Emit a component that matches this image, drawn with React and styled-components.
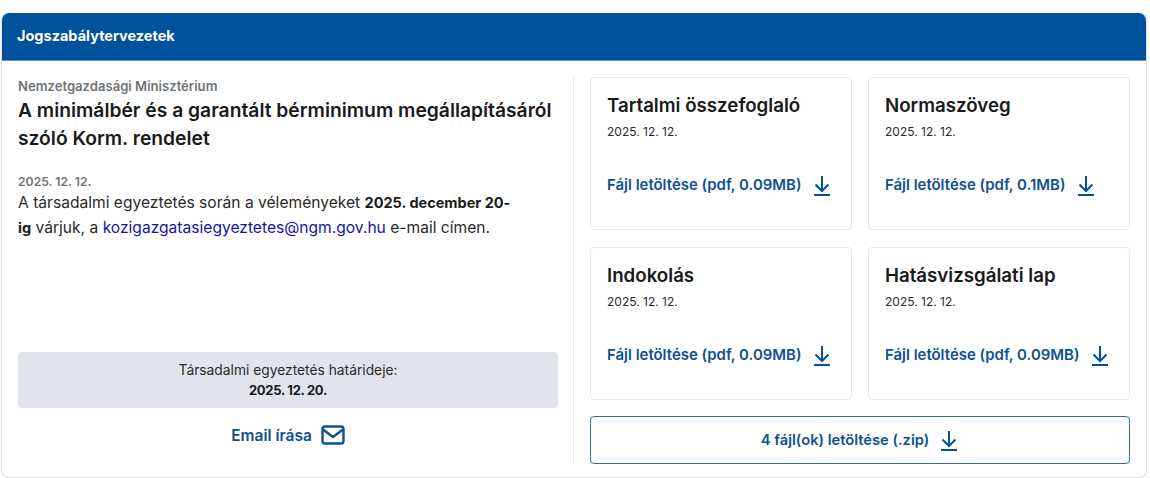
import styled, { createGlobalStyle } from 'styled-components';

const GlobalStyle = createGlobalStyle`
  html, body {
    margin: 0;
    background: #fff;
    font-family: 'Inter', 'Lato', sans-serif;
    color: #1a1a1a;
  }
`;

const BLUE = '#00529c';
const LINK = '#0f5092';

const Page = styled.div`
  padding: 13px 3px 0 1px;
`;

const Panel = styled.section`
  height: 465px;
  border: 1px solid #d9dde3;
  border-top: 0;
  border-radius: 8px;
  box-sizing: border-box;
  overflow: hidden;
  display: flex;
  flex-direction: column;
`;

const PanelHeader = styled.h2`
  margin: 0 -1px;
  height: 48px;
  padding: 0 0 2px 16px;
  display: flex;
  align-items: center;
  background: ${BLUE};
  border-bottom: 1px solid #5f93cf;
  box-sizing: border-box;
  color: #fff;
  font-size: 14.5px;
  font-weight: 700;
`;

const Body = styled.div`
  flex: 1;
  min-height: 0;
  display: grid;
  grid-template-columns: 572px 1fr;
  padding: 16px 16px 13px 0;
`;

const Left = styled.div`
  padding: 0 15px 0 16px;
  border-right: 1px solid #e6e8ec;
  display: flex;
  flex-direction: column;
`;

const Ministry = styled.div`
  font-size: 13.1px;
  line-height: 18px;
  font-weight: 600;
  color: #6f7378;
`;

const Title = styled.h1`
  margin: 1px 0 0;
  font-size: 19.25px;
  line-height: 28px;
  font-weight: 600;
  color: #1a1a1a;
`;

const PostDate = styled.div`
  margin-top: 21px;
  font-size: 12.2px;
  line-height: 17px;
  font-weight: 600;
  color: #6f7378;
`;

const Description = styled.p`
  margin: 0;
  width: 500px;
  font-size: 15.6px;
  line-height: 25px;
  color: #2a2a2a;

  strong {
    font-weight: 700;
    font-size: 14.5px;
    color: #1a1a1a;
  }

  a {
    color: #1414a8;
    text-decoration: none;
  }
`;

const Deadline = styled.div`
  margin-top: auto;
  height: 56px;
  border-radius: 4px;
  background: #e1e5eb;
  display: flex;
  flex-direction: column;
  align-items: center;
  justify-content: center;
  font-size: 13.8px;
  line-height: 20px;
  color: #2a2a2a;

  strong {
    font-size: 13px;
    font-weight: 700;
    letter-spacing: -0.3px;
    color: #1a1a1a;
  }
`;

const EmailLink = styled.a`
  margin: 15px 0 17px;
  height: 24px;
  display: flex;
  align-items: center;
  justify-content: center;
  gap: 9px;
  color: ${LINK};
  font-size: 15.5px;
  font-weight: 600;
`;

const Right = styled.div`
  padding-left: 16px;
  display: grid;
  grid-template-columns: 1fr 1fr;
  grid-template-rows: 153px 153px 48px;
  gap: 16px;
  row-gap: 16.5px;
`;

const FileCard = styled.article`
  border: 1px solid #e6e8ec;
  border-radius: 4px;
  padding: 15px 16px 0;
  box-sizing: border-box;
`;

const FileTitle = styled.h3`
  margin: 0;
  font-size: 18.7px;
  line-height: 26px;
  font-weight: 600;
  color: #1a1a1a;
`;

const FileDate = styled.div`
  margin-top: 4px;
  font-size: 12px;
  line-height: 18px;
  color: #2a2a2a;
`;

const FileLink = styled.a`
  margin-top: 32px;
  display: flex;
  align-items: center;
  gap: 10px;
  height: 24px;
  color: ${LINK};
  font-size: 14.95px;
  font-weight: 600;
`;

const ZipButton = styled.button`
  grid-column: 1 / -1;
  border: 1px solid #2f6ba8;
  border-radius: 4px;
  background: #fff;
  display: flex;
  align-items: center;
  justify-content: center;
  gap: 10px;
  color: ${LINK};
  font-family: inherit;
  font-size: 14.7px;
  font-weight: 600;
`;

const DownloadIcon = () => (
  <svg width="20" height="24" viewBox="0 0 20 24" fill="none" stroke={BLUE} strokeWidth="2">
    <path d="M10 3v15M3.5 11.5 10 18l6.500-6.500" />
    <path d="M2 22h16" />
  </svg>
);

const MailIcon = () => (
  <svg width="24" height="20" viewBox="0 0 24 20" fill="none" stroke={LINK} strokeWidth="2.400">
    <rect x="1.500" y="1.500" width="21" height="17" rx="2.500" />
    <path d="M2 4.500l10 7.500L22 4.500" />
  </svg>
);

const files = [
  { title: 'Tartalmi összefoglaló', size: '0.09MB' },
  { title: 'Normaszöveg', size: '0.1MB' },
  { title: 'Indokolás', size: '0.09MB' },
  { title: 'Hatásvizsgálati lap', size: '0.09MB' },
];

export default function App() {
  return (
    <Page>
      <GlobalStyle />
      <Panel>
        <PanelHeader>Jogszabálytervezetek</PanelHeader>
        <Body>
          <Left>
            <Ministry>Nemzetgazdasági Minisztérium</Ministry>
            <Title>A minimálbér és a garantált bérminimum megállapításáról szóló Korm. rendelet</Title>
            <PostDate>2025. 12. 12.</PostDate>
            <Description>
              A társadalmi egyeztetés során a véleményeket <strong>2025. december 20-ig</strong> várjuk, a{' '}
              <a href="#mail">kozigazgatasiegyeztetes@ngm.gov.hu</a> e-mail címen.
            </Description>
            <Deadline>
              <span>Társadalmi egyeztetés határideje:</span>
              <strong>2025. 12. 20.</strong>
            </Deadline>
            <EmailLink>
              Email írása <MailIcon />
            </EmailLink>
          </Left>
          <Right>
            {files.map((file) => (
              <FileCard key={file.title}>
                <FileTitle>{file.title}</FileTitle>
                <FileDate>2025. 12. 12.</FileDate>
                <FileLink>
                  Fájl letöltése (pdf, {file.size}) <DownloadIcon />
                </FileLink>
              </FileCard>
            ))}
            <ZipButton>
              4 fájl(ok) letöltése (.zip) <DownloadIcon />
            </ZipButton>
          </Right>
        </Body>
      </Panel>
    </Page>
  );
}
